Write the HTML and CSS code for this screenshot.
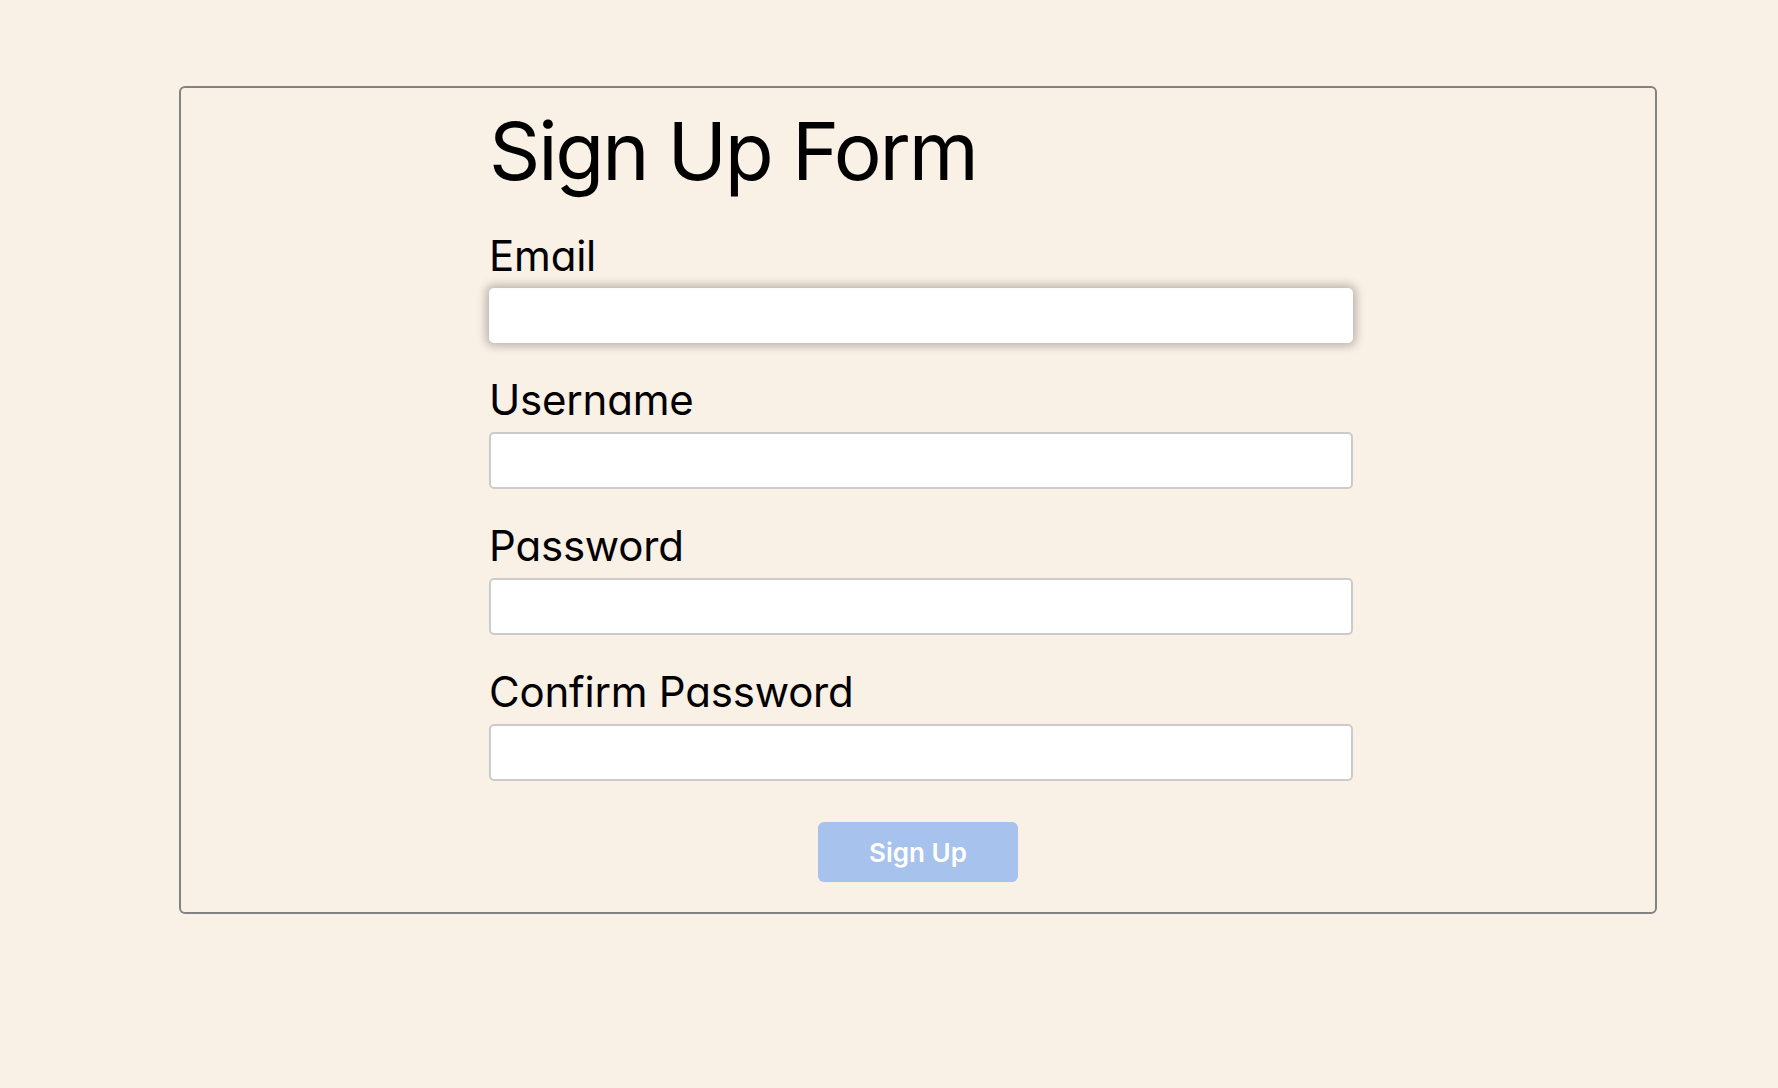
FILE: index.html
```html
<!DOCTYPE html>
<html lang="en">
<head>
<meta charset="utf-8">
<title>Sign Up Form</title>
<link rel="stylesheet" href="styles.css">
</head>
<body>
  <main class="card">
    <form class="signup">
      <h1 class="title">Sign Up Form</h1>
      <div class="field">
        <label class="label" for="email">Email</label>
        <input class="input input-focus" id="email" type="email">
      </div>
      <div class="field">
        <label class="label" for="username">Username</label>
        <input class="input" id="username" type="text">
      </div>
      <div class="field">
        <label class="label" for="password">Password</label>
        <input class="input" id="password" type="password">
      </div>
      <div class="field">
        <label class="label" for="confirm">Confirm Password</label>
        <input class="input" id="confirm" type="password">
      </div>
      <div class="actions">
        <button class="btn" type="button">Sign Up</button>
      </div>
    </form>
  </main>
</body>
</html>
```

FILE: styles.css
```css
* { box-sizing: border-box; }

html, body {
  margin: 0;
  padding: 0;
  background: #f9f0e6;
}

body {
  font-family: Inter, "Noto Sans", sans-serif;
  font-feature-settings: "cv11" 1;
  color: #000;
  padding-top: 86px;
  height: 1088px;
  overflow: hidden;
}

.card {
  margin-left: 179px;
  width: 1478px;
  border: 2px solid #828282;
  border-radius: 6px;
  padding: 15px 0 30px;
}

.signup {
  width: 858px;
  margin: 0 auto;
  display: flex;
  flex-direction: column;
  gap: 32px;
}

.title {
  margin: 0;
  font-size: 80px;
  line-height: 96px;
  font-weight: 400;
  letter-spacing: -2.2px;
}

.field {
  display: flex;
  flex-direction: column;
}

.label {
  font-size: 42px;
  line-height: 50px;
  font-weight: 400;
  letter-spacing: -0.2px;
  margin-bottom: 7px;
}

.input {
  width: 864px;
  height: 57px;
  border: 2px solid #cbcbcb;
  border-radius: 5px;
  background: #fff;
  font: inherit;
  font-size: 20px;
  padding: 0 12px;
  outline: none;
}

.input-focus {
  height: 55px;
  border-color: #fdfdfd;
  box-shadow: 0 0 10px 3px rgba(0, 0, 0, 0.26);
}

.actions {
  display: flex;
  justify-content: center;
  margin-top: 9px;
}

.btn {
  width: 200px;
  height: 60px;
  border: none;
  border-radius: 6px;
  background: #a7c2ec;
  color: #fff;
  font-family: Inter, "Noto Sans", sans-serif;
  font-feature-settings: "cv11" 1;
  font-size: 26px;
  font-weight: 600;
  cursor: pointer;
}
```
